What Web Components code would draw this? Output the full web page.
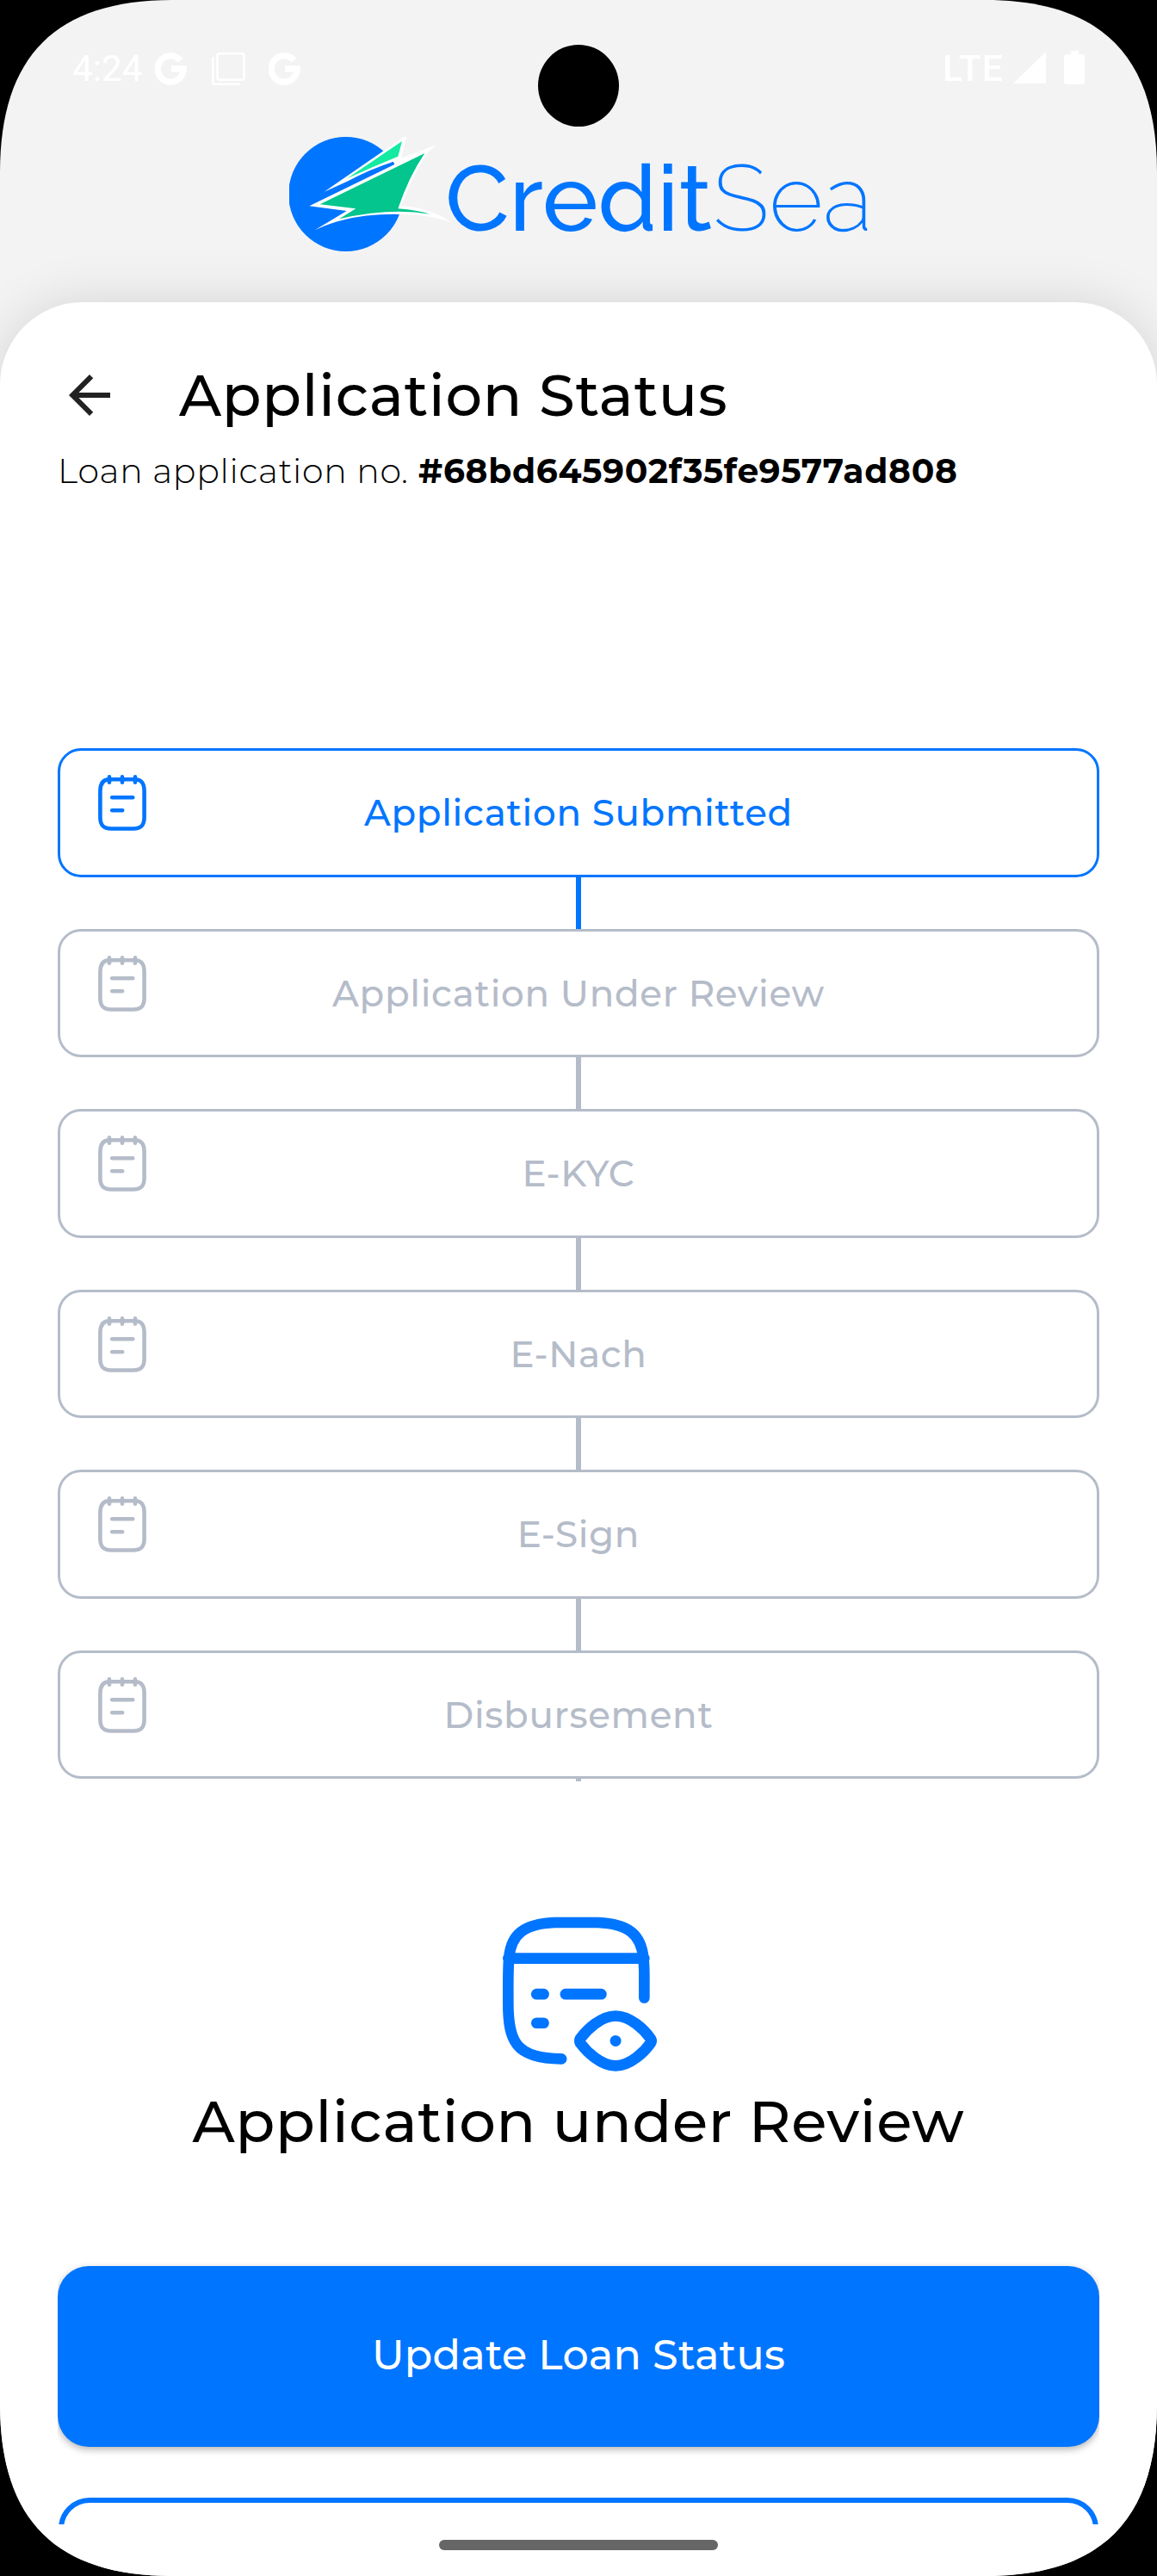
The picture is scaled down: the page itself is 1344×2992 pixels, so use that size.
<!DOCTYPE html>
<html lang="en">
<head>
<meta charset="utf-8">
<title>Application Status</title>
<style>
html,body{margin:0;background:#000}
body{width:1344px;height:2992px;overflow:hidden}
</style>
</head>
<body>
<loan-screen></loan-screen>
<script>
const define = (name, html, ready) => {
  const tpl = document.createElement('template');
  tpl.innerHTML = html;
  customElements.define(name, class extends HTMLElement {
    connectedCallback() {
      if (this.shadowRoot) return;
      this.attachShadow({mode: 'open'}).append(tpl.content.cloneNode(true));
      if (ready) ready.call(this, this.shadowRoot);
    }
  });
};

/* One line of text whose box is its cap height; with w, its ink is fitted to that width. */
define('fit-text', `
<style>
:host{display:block;flex:none}
span{display:block;width:max-content;white-space:pre;line-height:1;transform-origin:0 0}
</style><span></span>`, function (root) {
  const a = (n, d) => this.getAttribute(n) ?? d;
  const size = +a('size'), w = +a('w', 0), cap = +a('cap'), weight = a('weight', '400');
  const family = a('font', 'Montserrat, Inter, sans-serif'), ls = a('spacing', '0') + 'px';
  const span = root.querySelector('span');
  span.textContent = a('text');
  span.style.font = `${weight} ${size}px/1 ${family}`;
  span.style.letterSpacing = ls;
  const c = document.createElement('canvas').getContext('2d');
  c.font = `${weight} ${size}px ${family}`;
  const m = c.measureText(a('text'));
  const A = Math.round(m.fontBoundingBoxAscent), D = Math.round(m.fontBoundingBoxDescent);
  const y = Math.round(cap - (Math.floor((size - A - D) / 2) + A));
  this.style.height = cap + 'px';
  if (w) {
    const ink = m.actualBoundingBoxLeft + m.actualBoundingBoxRight + parseFloat(ls) * (a('text').length - 1);
    const s = w / ink;
    this.style.width = w + 'px';
    span.style.transform = `translate(${m.actualBoundingBoxLeft * s}px,${y}px) scaleX(${s})`;
  } else span.style.transform = `translateY(${y}px)`;
});

define('google-icon', `
<style>:host{display:block;width:37px;height:38px}svg{display:block}</style>
<svg width="37" height="38" viewBox="0 0 37 38" fill="none" stroke="#fff" stroke-width="7.4"><path d="M29.4 9A15 15.2 0 1 0 33.1 19H19"/></svg>`);

define('status-bar', `
<style>
:host{display:flex;height:40px;padding:59px 84px 60px 85px;color:#fff}
fit-text{margin-top:5px}
google-icon{margin:2px 0 0}
.space{flex:1}
svg{display:block;flex:none}
.camera{position:absolute;left:625px;top:52px;width:94px;height:95px;border-radius:50%;background:#000}
</style>
<fit-text text="4:24" size="42" w="80" cap="30" font="Roboto, sans-serif"></fit-text>
<google-icon style="margin-left:15px"></google-icon>
<svg style="margin:2px 0 0 29px" width="39" height="39" viewBox="0 0 39 39" fill="none" stroke="#fff" stroke-width="2.6"><rect x="6.5" y="1.3" width="31" height="30.5" rx="2.5"/><path d="M1.3 5V35.2Q1.3 36.8 3 36.8H33"/></svg>
<google-icon style="margin-left:27px"></google-icon>
<div class="space"></div>
<fit-text text="LTE" size="42" w="66" cap="30" weight="500" spacing="1" font="Roboto, sans-serif"></fit-text>
<svg style="margin:1px 0 0 13px" width="38" height="37" viewBox="0 0 38 37"><path d="M38 0V37H0Z" fill="#fff"/></svg>
<svg style="margin:0 0 0 21px" width="24" height="39" viewBox="0 0 24 39"><path d="M8 0H17V4H20.500Q24 4 24 7.500V35.500Q24 39 20.500 39H3.500Q0 39 0 35.500V7.500Q0 4 3.500 4H8Z" fill="#fff"/></svg>
<div class="camera"></div>`);

define('brand-logo', `
<style>
:host{display:flex;height:192px;padding-left:336px}
svg{display:block;flex:none}
.word{display:flex;gap:6px;margin:32px 0 0 -3px;color:#0075ff}
</style>
<svg width="188" height="133" viewBox="48 57 564 399">
<circle cx="245" cy="256.500" r="199.500" fill="#0075ff"/>
<path fill="#fff" d="M170 248 447 57H457L436 135 412 143Q330 169 250 212Z"/>
<path fill="#15eaa1" d="M250 202 441 72 427 125Q340 160 250 202Z"/>
<path fill="#fff" d="M118 298 416 152 410 142 437 131 500 109Q540 90 566 83 532 102 510 144 465 220 440 297 540 303 612 355 540 328 440 327 260 322 137 382L248 315Z"/>
<path fill="#0075ff" d="M200 246Q310 190 410 143L414 152 200 256Z"/>
<path fill="#03c58d" d="M155 292 520 114Q465 195 427 307 495 312 538 326 400 303 222 343L280 307Z"/>
</svg>
<div class="word">
<fit-text text="Credit" size="108" w="305" cap="77" weight="500" font="Raleway, Lato, sans-serif"></fit-text>
<fit-text text="Sea" size="108" w="176" cap="77" weight="200" font="Raleway, Lato, sans-serif"></fit-text>
</div>`);

define('page-heading', `
<style>
:host{display:block;padding:84px 0 0 71px;color:#000}
.row{display:flex;padding-left:9px;gap:79px;height:48px}
.sub{display:flex;gap:14px;margin-top:50px}
svg{display:block}
</style>
<div class="row">
<svg width="48" height="48" viewBox="4 4 16 16" fill="#222"><path d="M20 11H7.830l5.590-5.590L12 4l-8 8 8 8 1.410-1.410L7.830 13H20z"/></svg>
<fit-text text="Application Status" size="67.2" spacing="0.7" w="636" cap="48" weight="500"></fit-text>
</div>
<div class="sub">
<fit-text text="Loan application no." size="39.2" spacing="0.7" w="401" cap="28" weight="300"></fit-text>
<fit-text text="#68bd645902f35fe9577ad808" size="39.2" spacing="0.7" w="625" cap="28" weight="700"></fit-text>
</div>`);

define('status-step', `
<style>
:host{display:block;height:209.46px;color:#b5bcc9}
:host([active]){color:#0075ff}
.box{box-sizing:border-box;height:149.65px;border:3px solid;border-radius:27px;display:grid;grid-template-columns:1fr}
.box>*{grid-area:1/1}
svg{display:block;margin:28px 0 0 44px}
.label{justify-self:center;margin-top:57px;display:flex}
.line{width:6px;height:59.81px;background:currentColor;margin:0 auto}
:host([last]){height:152.65px}
:host([last]) .line{height:3px}
</style>
<div class="box">
<svg width="56" height="65" viewBox="0 0 56 65" fill="none" stroke="currentColor" stroke-width="4.600" stroke-linecap="round"><path d="M13 5.300H42.500C50 5.300 53.600 9.500 53.600 19V49C53.600 58.500 50 62.500 41 62.500H15C6 62.500 2.400 58.500 2.400 49V19C2.400 9.500 6 5.300 13 5.300ZM13 2.400V8.800M28 2.400V8.800M43 2.400V8.800M16.200 26.300H40.300M16.200 41.300H28.200"/></svg>
<div class="label"></div>
</div><div class="line"></div>`, function (root) {
  const t = document.createElement('fit-text');
  for (const [k, v] of Object.entries({text: this.getAttribute('label'), size: 42, cap: 30, weight: 500, spacing: 0.7})) t.setAttribute(k, v);
  root.querySelector('.label').append(t);
});

define('review-summary', `
<style>
:host{display:flex;flex-direction:column;align-items:center;padding-top:156.65px}
svg{display:block;margin-left:3px}
fit-text{margin-top:34px}
</style>
<svg width="181" height="180" viewBox="70 527 542 541" fill="none" stroke="#0075ff" stroke-width="38" stroke-linecap="round" stroke-linejoin="round">
<path d="M566 811V730C566 705 565 690 563 670 554 588 510 553 405 548H252C147 553 101 588 94 670 90 710 91 760 91 830 91 960 115 1024 277 1024M91 673H566M190 798H215M291 798H416M190 899H215"/>
<path d="M342 954C365 923 414 874 466 874 518 874 567 923 589 954Q593 961 589 968C567 999 518 1048 466 1048 414 1048 365 999 342 968Q339 961 342 954Z"/>
<circle cx="466" cy="961" r="19.500" fill="#0075ff" stroke="none"/></svg>
<fit-text text="Application under Review" size="67.2" spacing="0.7" cap="48" weight="500"></fit-text>`);

define('action-buttons', `
<style>
:host{display:flex;flex-direction:column;height:300px;padding-top:144px;overflow:hidden;gap:59px}
.primary{flex:none;height:210px;border-radius:36px;background:#0075ff;color:#fff;display:flex;justify-content:center;box-shadow:0 3px 8px rgba(0,0,0,.3)}
.primary fit-text{margin-top:86px}
.clip{height:31px;overflow:hidden;margin:0 -20px;padding:0 20px;flex:none}
.secondary{box-sizing:border-box;height:210px;margin:0 1px;border:6px solid #0075ff;border-radius:36px}
</style>
<div class="primary"><fit-text text="Update Loan Status" size="47.6" spacing="0.23" cap="34" weight="500"></fit-text></div>
<div class="clip"><div class="secondary"></div></div>`);

define('loan-screen', `
<style>
:host{display:flex;flex-direction:column;position:relative;width:1344px;height:2992px;background:#f3f3f3;overflow:hidden;
clip-path:path("M200 0H1144C1279 0 1344 65 1344 200V2792C1344 2927 1279 2992 1144 2992H200C65 2992 0 2927 0 2792V200C0 65 65 0 200 0Z")}
main{height:2641px;background:#fff;border-radius:96px 96px 0 0;box-shadow:0 0 60px rgba(0,0,0,.125);display:flex;flex-direction:column}
.steps{padding:308.4px 67px 0}
action-buttons{margin:0 67px}
.handle{width:324px;height:12px;border-radius:6px;background:#666;margin:18px auto 0}
</style>
<status-bar></status-bar>
<brand-logo></brand-logo>
<main>
<page-heading></page-heading>
<div class="steps">
<status-step active label="Application Submitted"></status-step>
<status-step label="Application Under Review"></status-step>
<status-step label="E-KYC"></status-step>
<status-step label="E-Nach"></status-step>
<status-step label="E-Sign"></status-step>
<status-step last label="Disbursement"></status-step>
</div>
<review-summary></review-summary>
<action-buttons></action-buttons>
<div class="handle"></div>
</main>`);
</script>
</body>
</html>
